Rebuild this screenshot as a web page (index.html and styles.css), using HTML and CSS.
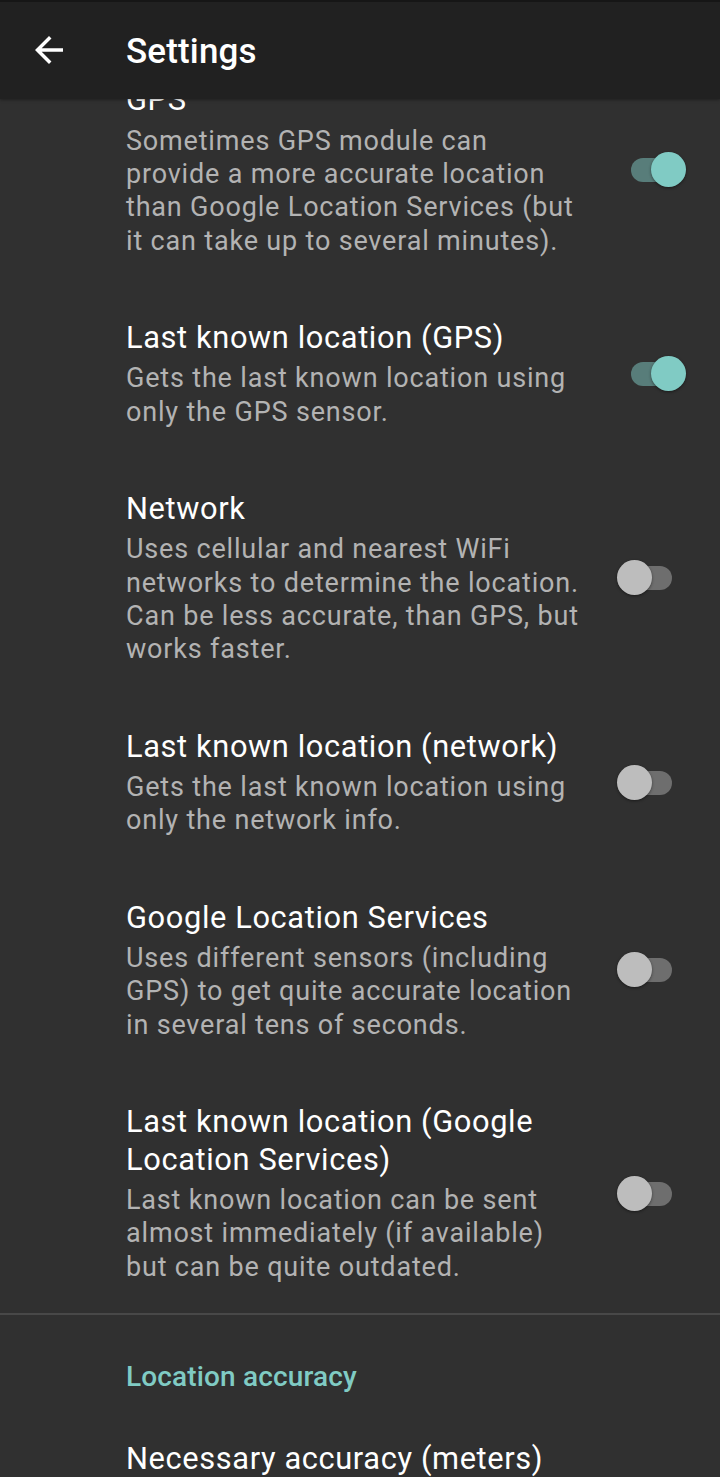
FILE: index.html
```html
<!DOCTYPE html>
<html lang="en">
<head>
<meta charset="utf-8">
<title>Settings</title>
<link rel="stylesheet" href="styles.css">
</head>
<body>
<div class="screen">
  <header class="appbar">
    <button class="back" aria-label="Back">
      <svg viewBox="0 0 24 24" width="42" height="42"><path d="M20 11H7.83l5.59-5.59L12 4l-8 8 8 8 1.41-1.41L7.83 13H20v-2z" fill="#ffffff"/></svg>
    </button>
    <h1 class="appbar-title">Settings</h1>
  </header>
  <main class="content">
    <div class="list">
      <div class="pref">
        <div class="pref-text">
          <div class="pref-title">GPS</div>
          <div class="pref-summary">Sometimes GPS module can provide a more accurate location than Google Location Services (but it can take up to several minutes).</div>
        </div>
        <div class="switch on"><span class="track"></span><span class="thumb"></span></div>
      </div>
      <div class="pref">
        <div class="pref-text">
          <div class="pref-title">Last known location (GPS)</div>
          <div class="pref-summary">Gets the last known location using only the GPS sensor.</div>
        </div>
        <div class="switch on"><span class="track"></span><span class="thumb"></span></div>
      </div>
      <div class="pref">
        <div class="pref-text">
          <div class="pref-title">Network</div>
          <div class="pref-summary">Uses cellular and nearest WiFi networks to determine the location. Can be less accurate, than GPS, but works faster.</div>
        </div>
        <div class="switch"><span class="track"></span><span class="thumb"></span></div>
      </div>
      <div class="pref">
        <div class="pref-text">
          <div class="pref-title">Last known location (network)</div>
          <div class="pref-summary">Gets the last known location using only the network info.</div>
        </div>
        <div class="switch"><span class="track"></span><span class="thumb"></span></div>
      </div>
      <div class="pref">
        <div class="pref-text">
          <div class="pref-title">Google Location Services</div>
          <div class="pref-summary">Uses different sensors (including GPS) to get quite accurate location in several tens of seconds.</div>
        </div>
        <div class="switch"><span class="track"></span><span class="thumb"></span></div>
      </div>
      <div class="pref last">
        <div class="pref-text">
          <div class="pref-title">Last known location (Google Location Services)</div>
          <div class="pref-summary">Last known location can be sent almost immediately (if available) but can be quite outdated.</div>
        </div>
        <div class="switch"><span class="track"></span><span class="thumb"></span></div>
      </div>
      <div class="divider"></div>
      <div class="category">Location accuracy</div>
      <div class="pref">
        <div class="pref-text">
          <div class="pref-title">Necessary accuracy (meters)</div>
        </div>
      </div>
    </div>
  </main>
</div>
</body>
</html>
```

FILE: styles.css
```css
* { box-sizing: border-box; }
html, body {
  margin: 0;
  padding: 0;
  background: #303030;
}
body {
  font-family: Roboto, "Noto Sans", sans-serif;
  color: #ffffff;
}
.screen {
  width: 720px;
  height: 1477px;
  overflow: hidden;
  display: flex;
  flex-direction: column;
  background: #303030;
}
.appbar {
  position: relative;
  z-index: 2;
  flex: 0 0 99px;
  height: 99px;
  background: #212121;
  border-top: 2px solid #161616;
  display: flex;
  align-items: center;
  padding-left: 28px;
  box-shadow: 0 1px 3px rgba(0,0,0,0.35);
}
.back {
  width: 42px;
  height: 42px;
  padding: 0;
  border: 0;
  background: transparent;
  display: flex;
  margin-top: -1px;
}
.appbar-title {
  margin: 2px 0 0 56px;
  font-size: 35px;
  font-weight: 500;
  line-height: 40px;
  color: #ffffff;
  letter-spacing: 0.15px;
}
.content {
  flex: 1 1 auto;
  overflow: hidden;
  position: relative;
  z-index: 1;
}
.list {
  margin-top: -48.6px;
}
.pref {
  display: flex;
  align-items: center;
  padding: 31px 0 30px 126px;
}
.pref-text {
  width: 462px;
  flex: 0 0 462px;
}
.pref-title {
  font-size: 30.8px;
  line-height: 38px;
  color: #ffffff;
  letter-spacing: 0.62px;
}
.pref-summary {
  margin-top: 5.1px;
  font-size: 27px;
  line-height: 33.4px;
  color: #b3b3b3;
  letter-spacing: 0.82px;
}
.switch {
  position: relative;
  width: 70px;
  height: 36px;
  margin-left: 28px;
}
.track {
  position: absolute;
  left: 15px;
  top: 6px;
  width: 41px;
  height: 24px;
  border-radius: 12px;
  background: #6e6e6e;
}
.thumb {
  position: absolute;
  left: 1px;
  top: 0;
  width: 35px;
  height: 35px;
  border-radius: 50%;
  background: #bdbdbd;
  box-shadow: 0 1px 3px rgba(0,0,0,0.45);
}
.switch.on .track { background: #587d7a; }
.switch.on .thumb { left: 35px; background: #80cbc4; }
.divider {
  height: 2px;
  background: #484848;
  margin-top: -1px;
}
.category {
  padding: 45px 0 0 126px;
  font-size: 28px;
  line-height: 34px;
  font-weight: 500;
  color: #80cbc4;
  letter-spacing: 0.15px;
}
.category + .pref { padding-top: 46px; }
```
